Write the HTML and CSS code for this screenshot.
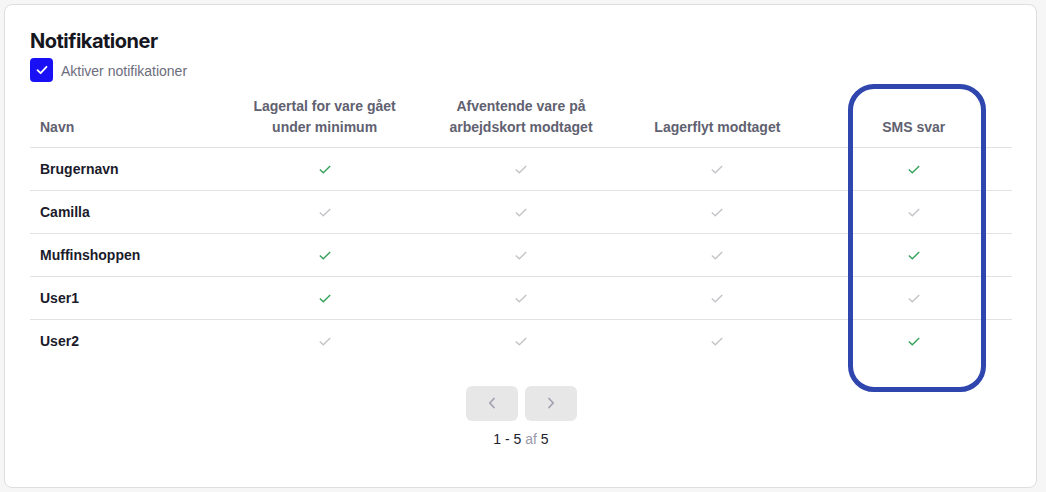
FILE: index.html
```html
<!DOCTYPE html>
<html lang="da">
<head>
<meta charset="utf-8">
<title>Notifikationer</title>
<link rel="stylesheet" href="styles.css">
</head>
<body>
<div class="card">
  <h2 class="title">Notifikationer</h2>
  <label class="enable">
    <span class="checkbox"><svg width="14" height="14" viewBox="0 0 14 14"><path d="M2.5 7.2 L5.6 10.2 L11.5 3.8" fill="none" stroke="#fff" stroke-width="1.8" stroke-linecap="round" stroke-linejoin="round"/></svg></span>
    <span class="enable-text">Aktiver notifikationer</span>
  </label>
  <div class="table-wrap">
    <table class="grid">
      <thead>
        <tr>
          <th class="name-col">Navn</th>
          <th>Lagertal for vare gået<br>under minimum</th>
          <th>Afventende vare på<br>arbejdskort modtaget</th>
          <th>Lagerflyt modtaget</th>
          <th>SMS svar</th>
        </tr>
      </thead>
      <tbody>
        <tr><td class="name-col">Brugernavn</td><td><i class="ck on"></i></td><td><i class="ck"></i></td><td><i class="ck"></i></td><td><i class="ck on"></i></td></tr>
        <tr><td class="name-col">Camilla</td><td><i class="ck"></i></td><td><i class="ck"></i></td><td><i class="ck"></i></td><td><i class="ck"></i></td></tr>
        <tr><td class="name-col">Muffinshoppen</td><td><i class="ck on"></i></td><td><i class="ck"></i></td><td><i class="ck"></i></td><td><i class="ck on"></i></td></tr>
        <tr><td class="name-col">User1</td><td><i class="ck on"></i></td><td><i class="ck"></i></td><td><i class="ck"></i></td><td><i class="ck"></i></td></tr>
        <tr><td class="name-col">User2</td><td><i class="ck"></i></td><td><i class="ck"></i></td><td><i class="ck"></i></td><td><i class="ck on"></i></td></tr>
      </tbody>
    </table>
    <div class="highlight"></div>
  </div>
  <div class="pager">
    <div class="pager-buttons">
      <button class="pbtn" aria-label="Forrige"><svg width="10" height="12" viewBox="0 0 10 12"><path d="M7 1.5 L2.8 6 L7 10.5" fill="none" stroke="#a3a3b3" stroke-width="1.8" stroke-linecap="round" stroke-linejoin="round"/></svg></button>
      <button class="pbtn" aria-label="Næste"><svg width="10" height="12" viewBox="0 0 10 12"><path d="M3 1.5 L7.2 6 L3 10.5" fill="none" stroke="#a3a3b3" stroke-width="1.8" stroke-linecap="round" stroke-linejoin="round"/></svg></button>
    </div>
    <div class="pager-text">1 - 5 <span class="muted">af</span> 5</div>
  </div>
</div>
</body>
</html>
```
FILE: styles.css
```css
* { box-sizing: border-box; }
html, body { margin: 0; padding: 0; }
body {
  background: #f6f6f6;
  font-family: "Liberation Sans", Arial, sans-serif;
  color: #1b1b2b;
  padding: 4px 9px 4px 4px;
}
.card {
  background: #fff;
  border: 1px solid #dedede;
  border-radius: 8px;
  height: 484px;
  padding: 24px 24px 0 25px;
}
.title {
  margin: 0;
  font-family: Inter, "Noto Sans", sans-serif;
  font-weight: 700;
  font-size: 20px;
  line-height: 24px;
  color: #16161f;
  letter-spacing: -0.5px;
}
.enable {
  display: flex;
  align-items: center;
  gap: 8px;
  margin-top: 5px;
  height: 24px;
}
.checkbox {
  width: 23px;
  height: 24px;
  border-radius: 4px;
  background: #1a10f5;
  display: flex;
  align-items: center;
  justify-content: center;
}
.enable-text {
  font-size: 14px;
  color: #6c6c7c;
  position: relative;
  top: 1px;
}
.table-wrap { position: relative; }
.grid {
  width: 100%;
  border-collapse: collapse;
  table-layout: fixed;
}
.grid th {
  font-size: 14px;
  font-weight: 700;
  color: #5f6170;
  line-height: 21px;
  text-align: center;
  vertical-align: bottom;
  padding: 14px 10px 9px;
  border-bottom: 1px solid #e2e2e2;
}
.grid td {
  height: 43px;
  text-align: center;
  vertical-align: middle;
  font-size: 14px;
  font-weight: 700;
  color: #1b1b2b;
  border-bottom: 1px solid #e2e2e2;
  padding: 0 10px;
}
.grid tbody tr:last-child td { border-bottom: none; }
.grid .name-col { text-align: left; }
.ck {
  display: inline-block;
  width: 12px;
  height: 9px;
  vertical-align: middle;
  position: relative;
  top: -1px;
  background: url("data:image/svg+xml;utf8,<svg xmlns='http://www.w3.org/2000/svg' width='12' height='9' viewBox='0 0 12 9'><path d='M0.8 4.6 L4.3 7.8 L11.2 1' fill='none' stroke='%23c4c4c8' stroke-width='1.4'/></svg>") no-repeat center;
}
.ck.on {
  background: url("data:image/svg+xml;utf8,<svg xmlns='http://www.w3.org/2000/svg' width='12' height='9' viewBox='0 0 12 9'><path d='M0.8 4.6 L4.3 7.8 L11.2 1' fill='none' stroke='%2335a15a' stroke-width='1.4'/></svg>") no-repeat center;
}
.highlight {
  position: absolute;
  left: 818px;
  top: 2px;
  width: 138px;
  height: 308px;
  border: 5px solid #2e46ae;
  border-radius: 26px;
  pointer-events: none;
}
.pager {
  display: flex;
  flex-direction: column;
  align-items: center;
  margin-top: 23px;
}
.pager-buttons { display: flex; gap: 7px; }
.pbtn {
  width: 52px;
  height: 35px;
  border: none;
  border-radius: 6px;
  background: #e7e7e7;
  display: flex;
  align-items: center;
  justify-content: center;
  padding: 0;
}
.pager-text {
  margin-top: 10px;
  font-size: 14px;
  color: #20202e;
}
.muted { color: #9a9aaa; }
```
